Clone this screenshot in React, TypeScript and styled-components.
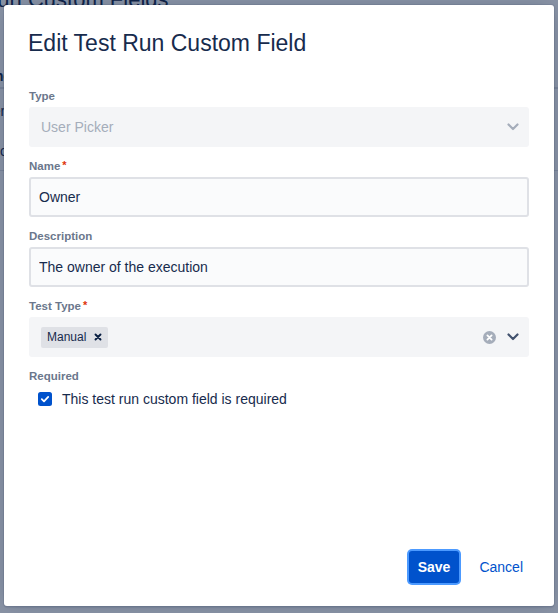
import React from "react";
import styled, { createGlobalStyle } from "styled-components";

const Global = createGlobalStyle`
  html, body { margin: 0; padding: 0; }
  body {
    width: 558px;
    height: 613px;
    overflow: hidden;
    background: #ffffff;
    font-family: "Liberation Sans", Arial, sans-serif;
  }
  * { box-sizing: border-box; }
`;

const Page = styled.div`
  position: relative;
  width: 558px;
  height: 613px;
  overflow: hidden;
  background: #ffffff;
`;

const Behind = styled.div`
  display: flex;
  flex-direction: column;
`;

const BehindTitle = styled.h1`
  margin: -14px 0 0 -65px;
  font-size: 22px;
  line-height: 28px;
  font-weight: 400;
  color: #172b4d;
  white-space: nowrap;
`;

const BehindTable = styled.div`
  margin-top: 48px;
  display: flex;
  flex-direction: column;
`;

const BehindHead = styled.div`
  height: 27px;
  border-bottom: 2px solid #dfe1e6;
  display: flex;
  align-items: center;
  padding-top: 2px;
  font-size: 14px;
  font-weight: 700;
  color: #172b4d;
`;

const BehindRow = styled.div<{ $bordered?: boolean }>`
  height: 41px;
  display: flex;
  align-items: center;
  padding-top: 2px;
  font-size: 14px;
  color: #172b4d;
  border-bottom: ${(p) => (p.$bordered ? "1px solid #dfe1e6" : "none")};
`;

const BehindCell = styled.span<{ $shift: number }>`
  margin-left: ${(p) => p.$shift}px;
  white-space: nowrap;
`;

const Overlay = styled.div`
  position: absolute;
  inset: 0;
  background: rgba(9, 30, 66, 0.48);
`;

const Modal = styled.div`
  position: absolute;
  left: 4px;
  top: 5px;
  width: 550px;
  height: 601px;
  background: #ffffff;
  border-radius: 3px;
  box-shadow: 0 0 0 1px rgba(9, 30, 66, 0.08), 0 2px 1px rgba(9, 30, 66, 0.08),
    0 0 20px -6px rgba(9, 30, 66, 0.31);
  display: flex;
  flex-direction: column;
`;

const Header = styled.div`
  padding: 24px 24px 0 24px;
`;

const Title = styled.h2`
  margin: 0;
  font-size: 23px;
  line-height: 28px;
  font-weight: 400;
  color: #172b4d;
  white-space: nowrap;
`;

const Body = styled.div`
  padding: 31px 25px 0 25px;
  display: flex;
  flex-direction: column;
  gap: 11px;
`;

const Group = styled.div`
  display: flex;
  flex-direction: column;
`;

const Label = styled.div`
  font-size: 11.5px;
  line-height: 16px;
  font-weight: 700;
  color: #6b778c;
  margin-bottom: 3px;
  display: flex;
  align-items: flex-start;
`;

const Asterisk = styled.span`
  color: #de350b;
  font-size: 11px;
  line-height: 14px;
  padding-left: 2px;
`;

const SelectBox = styled.div<{ $disabled?: boolean }>`
  height: 40px;
  border-radius: 3px;
  background: #f4f5f7;
  display: flex;
  align-items: center;
  padding: 0 10px 0 12px;
  gap: 11px;
  font-size: 14px;
  color: ${(p) => (p.$disabled ? "#a5adba" : "#172b4d")};
`;

const SelectValue = styled.div`
  flex: 1;
  display: flex;
  align-items: center;
  min-width: 0;
`;

const TextInput = styled.input`
  height: 40px;
  width: 100%;
  border: 2px solid #dfe1e6;
  border-radius: 3px;
  background: #fafbfc;
  padding: 0 8px;
  font-family: inherit;
  font-size: 14px;
  color: #172b4d;
  outline: none;
`;

const Tag = styled.div`
  height: 21px;
  border-radius: 2px;
  background: #dfe1e6;
  display: flex;
  align-items: center;
  padding: 0 6px;
  gap: 8px;
  font-size: 12px;
  color: #172b4d;
`;

const IconWrap = styled.span`
  display: flex;
  align-items: center;
  justify-content: center;
`;

const CheckRow = styled.div`
  margin-top: 4px;
  height: 16px;
  display: flex;
  align-items: center;
  padding-left: 9px;
  gap: 10px;
  font-size: 14px;
  color: #172b4d;
`;

const Footer = styled.div`
  margin-top: auto;
  display: flex;
  justify-content: flex-end;
  align-items: center;
  gap: 10px;
  padding: 0 21px 23px 25px;
`;

const PrimaryButton = styled.button`
  height: 32px;
  padding: 0 9px;
  border: none;
  border-radius: 3px;
  background: #0052cc;
  color: #ffffff;
  font-family: inherit;
  font-size: 14px;
  font-weight: 700;
  box-shadow: 0 0 0 2px #4c9aff;
`;

const LinkButton = styled.button`
  height: 32px;
  padding: 0 10px;
  border: none;
  background: transparent;
  color: #0052cc;
  font-family: inherit;
  font-size: 14px;
`;

const Chevron = ({ color }: { color: string }) => (
  <svg width="12" height="8" viewBox="0 0 12 8">
    <path
      d="M1.5 1.5 L6 6 L10.5 1.5"
      fill="none"
      stroke={color}
      strokeWidth="2.2"
      strokeLinecap="round"
      strokeLinejoin="round"
    />
  </svg>
);

const ClearIcon = () => (
  <svg width="13" height="13" viewBox="0 0 13 13">
    <circle cx="6.5" cy="6.5" r="6.5" fill="#a5adba" />
    <path
      d="M4.4 4.4 L8.6 8.6 M8.6 4.4 L4.4 8.6"
      stroke="#ffffff"
      strokeWidth="1.8"
      strokeLinecap="round"
    />
  </svg>
);

const TagCross = () => (
  <svg width="8" height="8" viewBox="0 0 8 8">
    <path
      d="M1.5 1.5 L6.5 6.5 M6.5 1.5 L1.5 6.5"
      stroke="#091e42"
      strokeWidth="1.9"
      strokeLinecap="round"
    />
  </svg>
);

const CheckIcon = () => (
  <svg width="14" height="14" viewBox="0 0 14 14">
    <rect width="14" height="14" rx="2.5" fill="#0052cc" />
    <path
      d="M3.8 7.2 L6 9.3 L10.2 4.9"
      fill="none"
      stroke="#ffffff"
      strokeWidth="1.8"
      strokeLinecap="round"
      strokeLinejoin="round"
    />
  </svg>
);

export default function App() {
  return (
    <Page>
      <Global />
      <Behind>
        <BehindTitle>Test Run Custom Fields</BehindTitle>
        <BehindTable>
          <BehindHead>
            <BehindCell $shift={-27}>Name</BehindCell>
          </BehindHead>
          <BehindRow>
            <BehindCell $shift={-36}>Owner</BehindCell>
          </BehindRow>
          <BehindRow $bordered>
            <BehindCell $shift={-24}>Execution Notes</BehindCell>
          </BehindRow>
        </BehindTable>
      </Behind>
      <Overlay />
      <Modal role="dialog">
        <Header>
          <Title>Edit Test Run Custom Field</Title>
        </Header>
        <Body>
          <Group>
            <Label>Type</Label>
            <SelectBox $disabled>
              <SelectValue>User Picker</SelectValue>
              <IconWrap>
                <Chevron color="#a5adba" />
              </IconWrap>
            </SelectBox>
          </Group>
          <Group>
            <Label>
              Name<Asterisk>*</Asterisk>
            </Label>
            <TextInput readOnly value="Owner" />
          </Group>
          <Group>
            <Label>Description</Label>
            <TextInput readOnly value="The owner of the execution" />
          </Group>
          <Group>
            <Label>
              Test Type<Asterisk>*</Asterisk>
            </Label>
            <SelectBox>
              <SelectValue>
                <Tag>
                  Manual
                  <IconWrap>
                    <TagCross />
                  </IconWrap>
                </Tag>
              </SelectValue>
              <IconWrap>
                <ClearIcon />
              </IconWrap>
              <IconWrap>
                <Chevron color="#42526e" />
              </IconWrap>
            </SelectBox>
          </Group>
          <Group>
            <Label>Required</Label>
            <CheckRow>
              <IconWrap>
                <CheckIcon />
              </IconWrap>
              This test run custom field is required
            </CheckRow>
          </Group>
        </Body>
        <Footer>
          <PrimaryButton>Save</PrimaryButton>
          <LinkButton>Cancel</LinkButton>
        </Footer>
      </Modal>
    </Page>
  );
}
